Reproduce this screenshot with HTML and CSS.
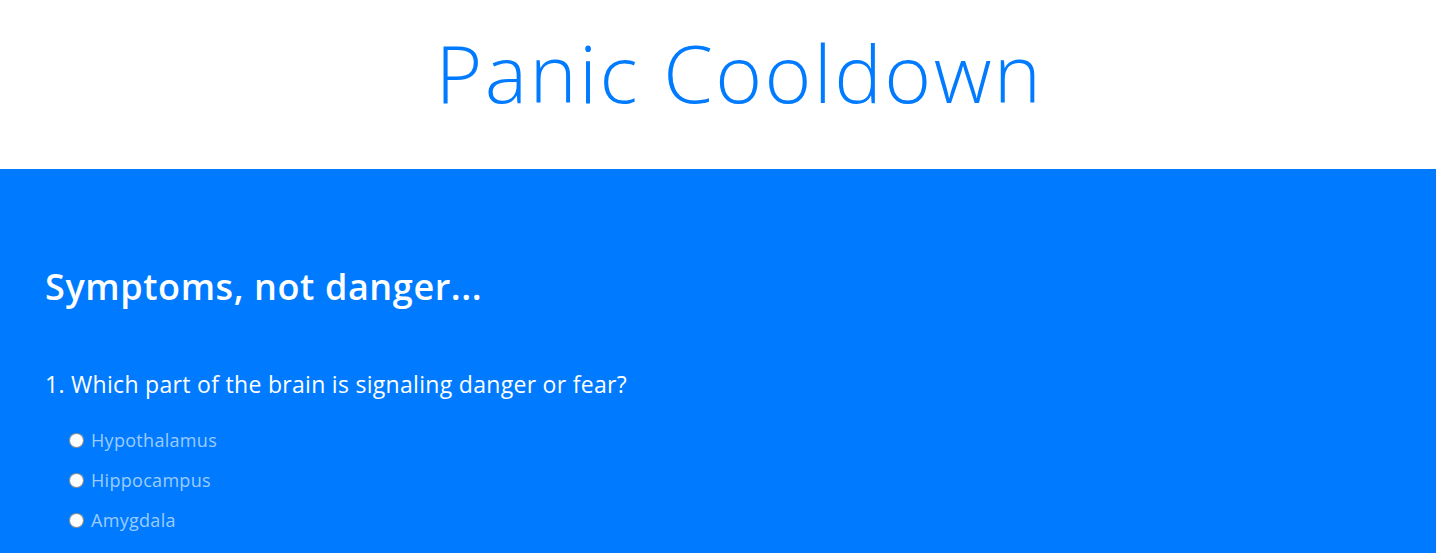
FILE: index.html
```html
<!DOCTYPE html>
<html lang="en">
<head>
<meta charset="utf-8">
<title>Panic Cooldown</title>
<link rel="stylesheet" href="styles.css">
</head>
<body>
<header class="top">
  <h1 class="title">Panic Cooldown</h1>
</header>
<main class="panel">
  <h2 class="section-title">Symptoms, not danger...</h2>
  <div class="question">
    <p class="q-text">1. Which part of the brain is signaling danger or fear?</p>
    <label class="option"><input type="radio" name="q1"> <span>Hypothalamus</span></label>
    <label class="option"><input type="radio" name="q1"> <span>Hippocampus</span></label>
    <label class="option"><input type="radio" name="q1"> <span>Amygdala</span></label>
  </div>
</main>
</body>
</html>
```
FILE: styles.css
```css
html, body {
  margin: 0;
  padding: 0;
}
body {
  font-family: "Open Sans", "Noto Sans", sans-serif;
  background: #007bff;
  color: #fff;
}
.top {
  background: #fff;
  height: 169px;
  display: flex;
  justify-content: center;
  align-items: flex-start;
  padding-left: 43px;
  box-sizing: border-box;
}
.title {
  margin: 24px 0 0;
  font-size: 80px;
  font-weight: 300;
  color: #007bff;
  line-height: 1.2;
  letter-spacing: 2.4px;
}
.panel {
  padding: 96px 45px 0;
}
.section-title {
  margin: 0 0 63px;
  font-size: 36px;
  font-weight: 600;
  line-height: 1.2;
  letter-spacing: 0.6px;
}
.q-text {
  margin: 0 0 29px;
  font-size: 23px;
  line-height: 1.2;
  letter-spacing: 0.3px;
}
.option {
  display: flex;
  align-items: center;
  margin: 0 0 15px 24px;
  font-size: 18px;
  line-height: 25px;
  letter-spacing: 0.3px;
  color: #9dcbff;
}
.option:last-child {
  margin-bottom: 0;
}
.option input {
  margin: 0 7px 0 0;
  width: 15px;
  height: 15px;
}
```
